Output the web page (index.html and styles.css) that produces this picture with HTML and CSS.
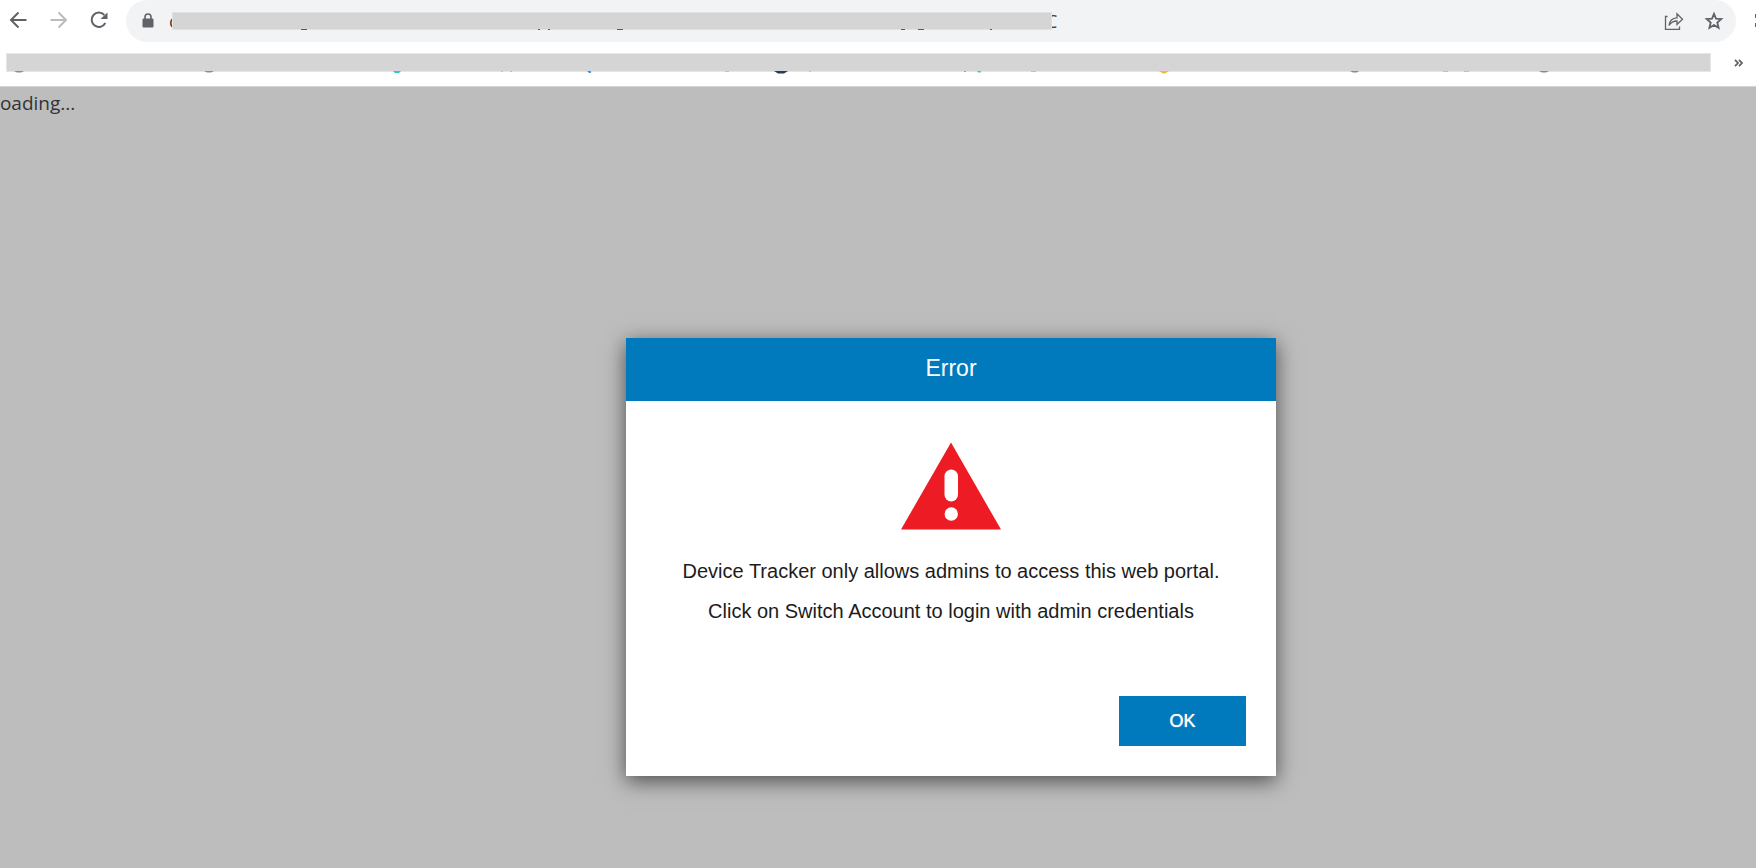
FILE: index.html
```html
<!DOCTYPE html>
<html lang="en">
<head>
<meta charset="utf-8">
<title>Device Tracker</title>
<link rel="stylesheet" href="styles.css">
</head>
<body>
<header class="browser">
  <div class="toolbar">
    <nav class="nav">
      <button class="icon-button" aria-label="Back"><svg width="20" height="20" viewBox="0 0 20 20"><path d="M17.500 10H2.500M9.500 2.500L2 10L9.500 17.500" fill="none" stroke="#5f6368" stroke-width="2"/></svg></button>
      <button class="icon-button" aria-label="Forward"><svg width="20" height="20" viewBox="0 0 20 20"><path d="M1.500 10H16.500M9.500 2.500L17 10L9.500 17.500" fill="none" stroke="#babcbe" stroke-width="2"/></svg></button>
      <button class="icon-button" aria-label="Reload"><svg width="20" height="20" viewBox="0 0 20 20"><path d="M16.300 13A7.200 7.200 0 1 1 15.300 5" fill="none" stroke="#5f6368" stroke-width="2"/><path d="M18.500 2.500V9H11.500Z" fill="#5f6368"/></svg></button>
    </nav>
    <div class="omnibox">
      <svg class="lock" width="12" height="16" viewBox="0 0 12 16"><path d="M3 6V4a3 3 0 0 1 6 0V6" fill="none" stroke="#5f6368" stroke-width="1.600"/><rect x="0.500" y="5.500" width="11" height="9" rx="1.200" fill="#5f6368"/></svg>
      <span class="url-edge">c</span>
      <div class="url-mask">
        <svg class="traces" width="100%" height="2">
          <path d="M128 .5h6M365 .5h2M375 .5h2M444 .5h6M728 .5h4M745 .5h6M817 .5h2" stroke="#555b62"/>
        </svg>
      </div>
      <span class="url-edge">C</span>
      <div class="page-actions">
        <button class="icon-button" aria-label="Share"><svg width="20" height="20" viewBox="0 0 20 20"><path d="M3.500 5.500H1.500V18.300H15.500V15.500M5 14.500C5.500 9.500 8.500 7 13 6.800V2.800L18.500 8.300L13 13.500V10C9.500 10 7 11.200 5 14.500Z" fill="none" stroke="#5f6368" stroke-width="1.300"/></svg></button>
        <button class="icon-button" aria-label="Bookmark this page"><svg width="20" height="20" viewBox="0 0 20 20"><path d="M10 2.800L12 7.600L17.300 8L13.300 11.500L14.600 16.800L10 14L5.400 16.800L6.700 11.500L2.700 8L8 7.600Z" fill="none" stroke="#5f6368" stroke-width="1.800"/></svg></button>
      </div>
    </div>
    <svg class="edge-icon" width="1" height="14" viewBox="0 0 1 14"><path d="M.5 0V4M.5 9V13" stroke="#5f6368"/></svg>
  </div>
  <div class="bookmarks">
    <div class="bookmark-mask">
      <svg class="traces" width="100%" height="3">
        <path d="M7 0h10l-3 1.500h-4zM197 0h10l-3 1.500h-4zM1343 0h9l-2 1.500h-4zM1532 0h10l-3 1.500h-4z" fill="#8a8d90"/>
        <path d="M386 0h8l-2 2h-4z" fill="#35c3cc"/>
        <path d="M580 0h4v2h-2z" fill="#3f95ee"/>
        <path d="M767 0h14l-4 2.500h-6z" fill="#2b3964"/>
        <path d="M957 0h2v1h-2zM970 0h4v1.500h-3z" fill="#62c878"/>
        <path d="M1152 0h10l-4 2.500h-2z" fill="#f5b73b"/>
        <path d="M494 0h2M503 0h2M718 0h4M802 0h2M1024 0h5M1436 0h5M1457 0h5" stroke="#999"/>
      </svg>
    </div>
    <button class="overflow" aria-label="More bookmarks"><svg width="10" height="8" viewBox="0 0 10 8"><path d="M1 .8L4 4L1 7.200M5 .8L8 4L5 7.200" fill="none" stroke="#5f6368" stroke-width="1.800"/></svg></button>
  </div>
</header>
<main class="page">
  <p class="loading">Loading...</p>
  <section class="dialog" role="dialog" aria-labelledby="dialog-title">
    <h1 class="dialog-title" id="dialog-title">Error</h1>
    <div class="dialog-body">
      <svg class="warning" width="100" height="88" viewBox="0 0 100 88"><path d="M50 .5L100 87.500H0Z" fill="#ed1c24"/><rect x="43.500" y="27.500" width="13.500" height="32" rx="6.750" fill="#fff"/><circle cx="50.250" cy="72" r="6.700" fill="#fff"/></svg>
      <p class="message">Device Tracker only allows admins to access this web portal.</p>
      <p class="message">Click on Switch Account to login with admin credentials</p>
    </div>
    <div class="dialog-actions"><button class="ok">OK</button></div>
  </section>
</main>
</body>
</html>
```
FILE: styles.css
```css
* { box-sizing: border-box; }
body {
  margin: 0;
  min-height: 100vh;
  display: flex;
  flex-direction: column;
  overflow-x: hidden;
  background: #bdbdbd;
  font-family: "Liberation Sans", Arial, sans-serif;
}
button { border: 0; padding: 0; background: none; font: inherit; }
svg { display: block; }
.browser { background: #fff; border-bottom: 1px solid #d4d4d4; }
.toolbar { display: flex; align-items: center; height: 42px; }
.nav { display: flex; gap: 20px; width: 126px; padding: 0 0 3px 9px; }
.icon-button { width: 20px; height: 20px; }
.omnibox {
  flex: 1;
  display: flex;
  align-items: center;
  height: 42px;
  padding: 0 12px 0 16px;
  border-radius: 21px;
  background: #f1f3f4;
}
.url-edge {
  width: 12px;
  color: #3c4043;
  font-family: "Open Sans", sans-serif;
  font-size: 18px;
  line-height: 24px;
}
.lock { margin-right: 15px; }
.url-mask {
  position: relative;
  flex: 0 1 880px;
  height: 18px;
  margin: 0 -6px 0 -9px;
  background: #d5d5d5;
  border: 1px solid #e0e1e1;
}
.traces { position: absolute; top: 100%; left: 0; }
.page-actions { display: flex; gap: 20px; margin-left: auto; }
.edge-icon { margin-left: 19px; }
.bookmarks {
  display: flex;
  align-items: center;
  height: 44px;
  padding: 10px 12px 13px 6px;
}
.bookmark-mask {
  position: relative;
  flex: 1;
  height: 19px;
  background: #d5d5d5;
  border: 1px solid #e6e6e6;
}
.overflow { margin-left: 23px; }
.page { flex: 1; padding: 0 0 40px 146px; }
.loading {
  margin: 0 0 0 -156px;
  padding-top: 1px;
  color: #333;
  font-family: "Open Sans", sans-serif;
  font-size: 19px;
  line-height: 30px;
}
.dialog {
  width: 650px;
  max-width: 100%;
  margin: 220px auto 0;
  background: #fff;
  box-shadow: 0 5px 20px rgba(0, 0, 0, .6);
}
.dialog-title {
  margin: 0;
  height: 63px;
  color: #fff;
  background: #007abc;
  font-size: 23px;
  font-weight: 400;
  line-height: 60px;
  text-align: center;
}
.dialog-body { padding: 41px 30px 0; text-align: center; }
.warning { margin: 0 auto 21px; }
.message { margin: 0; color: #1c1c1c; font-size: 20px; line-height: 40px; }
.dialog-actions { display: flex; justify-content: flex-end; padding: 65px 30px 30px; }
.ok {
  width: 127px;
  height: 50px;
  color: #fff;
  background: #007abc;
  font-size: 18px;
  text-shadow: 0 0 1px #fff;
}
```
